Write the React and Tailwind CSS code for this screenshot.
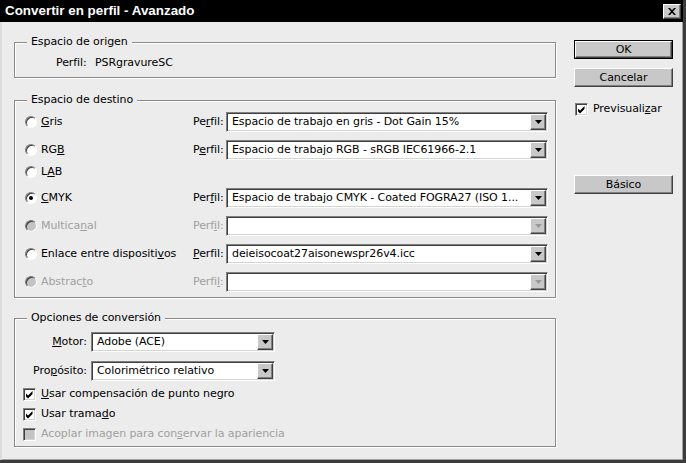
import React from 'react';

// Classic Windows-style "Convertir en perfil" dialog

const U = ({ children }) => <span className="underline underline-offset-[1px]">{children}</span>;

function Radio({ checked = false, disabled = false, children }) {
  return (
    <div className={`flex items-center gap-[4px] ${disabled ? 'text-[#a0a0a0]' : 'text-black'}`}>
      <div
        className={`flex h-[12px] w-[12px] shrink-0 items-center justify-center rounded-full border border-t-[#7a7a7a] border-l-[#7a7a7a] border-b-white border-r-white shadow-[inset_1px_1px_0_#404040] ${
          disabled ? 'bg-[#c4c4c4]' : 'bg-white'
        }`}
      >
        {checked && <div className="h-[4px] w-[4px] rounded-full bg-black" />}
      </div>
      <span>{children}</span>
    </div>
  );
}

function Checkbox({ checked = false, disabled = false, children }) {
  return (
    <div className={`flex items-center gap-[5px] ${disabled ? 'text-[#a0a0a0]' : 'text-black'}`}>
      <div
        className={`flex h-[13px] w-[13px] shrink-0 items-center justify-center border border-t-[#808080] border-l-[#808080] border-b-white border-r-white shadow-[inset_1px_1px_0_#404040,inset_-1px_-1px_0_#d4d4d4] ${
          disabled ? 'bg-[#c4c4c4]' : 'bg-white'
        }`}
      >
        {checked && (
          <svg width="9" height="9" viewBox="0 0 9 9">
            <path d="M1 3.5l2 2 4.5-4.5v3l-4.5 4.5-2-2z" fill="#000" />
          </svg>
        )}
      </div>
      {children && <span>{children}</span>}
    </div>
  );
}

function Select({ value = '', disabled = false, className = '' }) {
  return (
    <div
      className={`flex h-[20px] items-center border border-t-[#808080] border-l-[#808080] border-b-white border-r-white bg-white shadow-[inset_1px_1px_0_#404040,inset_-1px_-1px_0_#d4d4d4] ${className}`}
    >
      <span className="flex-1 truncate whitespace-nowrap pl-[5px] text-black">{value}</span>
      <div className="mr-[1px] flex h-[16px] w-[16px] shrink-0 items-center justify-center border border-t-white border-l-white border-b-[#404040] border-r-[#404040] bg-[#c8c8c8] shadow-[inset_-1px_-1px_0_#808080]">
        <svg width="7" height="4" viewBox="0 0 7 4">
          <path d="M0 0h7L3.5 4z" fill={disabled ? '#9a9a9a' : '#000'} />
        </svg>
      </div>
    </div>
  );
}

function Button({ children, isDefault = false, className = '' }) {
  return (
    <div className={`h-[19px] w-[99px] ${isDefault ? 'border border-black' : ''} ${className}`}>
      <div className="flex h-full w-full items-center justify-center border border-t-white border-l-white border-b-[#404040] border-r-[#404040] bg-[#c8c8c8] shadow-[inset_-1px_-1px_0_#808080] text-black">
        {children}
      </div>
    </div>
  );
}

function Group({ title, className = '', children }) {
  return (
    <fieldset
      className={`border border-[#8a8a8a] pl-[10px] pr-[6px] shadow-[inset_1px_1px_0_#fff,1px_1px_0_#fff] ${className}`}
    >
      <legend className="ml-[2px] bg-[#ececec] px-[4px] leading-[14px] text-black">{title}</legend>
      {children}
    </fieldset>
  );
}

function DestRow({ radio, perfil, value, disabled, className = '' }) {
  return (
    <div className={`flex h-[20px] items-center ${className}`}>
      <div className="w-[168px]">{radio}</div>
      {perfil && (
        <>
          <div className={`w-[33px] ${disabled ? 'text-[#a0a0a0]' : 'text-black'}`}>{perfil}</div>
          <Select className="w-[322px]" value={value} disabled={disabled} />
        </>
      )}
    </div>
  );
}

export default function App() {
  return (
    <div className="flex h-[463px] w-[686px] flex-col border-r-[3px] border-b-[3px] border-[#3c3c3c] bg-[#ececec] font-['DejaVu_Sans',sans-serif] text-[11px] leading-[14px] tracking-[-0.08px] text-black">
      {/* Title bar */}
      <div className="flex h-[22px] shrink-0 items-center justify-between bg-black pl-[5px] pr-[2px]">
        <span className="font-['Liberation_Sans',sans-serif] text-[13.4px] font-bold tracking-normal text-white">
          Convertir en perfil - Avanzado
        </span>
        <div className="flex h-[15px] w-[18px] items-center justify-center border border-t-white border-l-white border-b-[#404040] border-r-[#404040] bg-[#c8c8c8] shadow-[inset_-1px_-1px_0_#808080]">
          <svg width="8" height="7" viewBox="0 0 8 7">
            <path d="M0 0h2l2 2.2L6 0h2L5 3.5 8 7H6L4 4.8 2 7H0l3-3.5z" fill="#000" />
          </svg>
        </div>
      </div>

      {/* Body */}
      <div className="flex flex-1 border-l-[2px] border-[#dcdcdc] pl-[12px] pt-[13px] shadow-[inset_-1px_-1px_0_#a0a0a0]">
        {/* Left column */}
        <div className="flex w-[542px] flex-col">
          <Group title="Espacio de origen" className="pb-[7px]">
            <div className="mt-[7px] flex h-[14px] items-center pl-[31px]">
              <span className="w-[39px]">Perfil:</span>
              <span>PSRgravureSC</span>
            </div>
          </Group>

          <Group title="Espacio de destino" className="mt-[15px] pb-[5px]">
            <div className="pt-[5px]">
              <DestRow
                radio={<Radio><U>G</U>ris</Radio>}
                perfil={<>Pe<U>r</U>fil:</>}
                value="Espacio de trabajo en gris - Dot Gain 15%"
              />
              <DestRow
                className="mt-[8px]"
                radio={<Radio>RG<U>B</U></Radio>}
                perfil={<>P<U>e</U>rfil:</>}
                value="Espacio de trabajo RGB - sRGB IEC61966-2.1"
              />
              <DestRow className="mt-[2px]" radio={<Radio>L<U>A</U>B</Radio>} />
              <DestRow
                className="mt-[6px]"
                radio={<Radio checked><U>C</U>MYK</Radio>}
                perfil={<>Per<U>f</U>il:</>}
                value="Espacio de trabajo CMYK - Coated FOGRA27 (ISO 1..."
              />
              <DestRow
                className="mt-[8px]"
                disabled
                radio={<Radio disabled>Multica<U>n</U>al</Radio>}
                perfil={<>Perf<U>i</U>l:</>}
                value=""
              />
              <DestRow
                className="mt-[8px]"
                radio={<Radio>Enlace entre dispositi<U>v</U>os</Radio>}
                perfil={<><U>P</U>erfil:</>}
                value="deieisocoat27aisonewspr26v4.icc"
              />
              <DestRow
                className="mt-[8px]"
                disabled
                radio={<Radio disabled>Abstrac<U>t</U>o</Radio>}
                perfil={<>Perfi<U>l</U>:</>}
                value=""
              />
            </div>
          </Group>

          <Group title="Opciones de conversión" className="mt-[13px] pb-[2px]">
            <div className="pt-[7px]">
              <div className="flex h-[20px] items-center">
                <span className="w-[66px] pr-[4px] text-right"><U>M</U>otor:</span>
                <Select className="w-[184px]" value="Adobe (ACE)" />
              </div>
              <div className="mt-[9px] flex h-[20px] items-center">
                <span className="w-[66px] pr-[4px] text-right">Pro<U>p</U>ósito:</span>
                <Select className="w-[184px]" value="Colorimétrico relativo" />
              </div>
              <div className="-ml-[2px] mt-[3px] flex h-[20px] items-center">
                <Checkbox checked><U>U</U>sar compensación de punto negro</Checkbox>
              </div>
              <div className="-ml-[2px] flex h-[20px] items-center">
                <Checkbox checked>Usar trama<U>d</U>o</Checkbox>
              </div>
              <div className="-ml-[2px] flex h-[20px] items-center">
                <Checkbox disabled>Acoplar imagen para con<U>s</U>ervar la apariencia</Checkbox>
              </div>
            </div>
          </Group>
        </div>

        {/* Right column */}
        <div className="ml-[18px] mt-[5px] flex w-[99px] flex-col">
          <Button isDefault>OK</Button>
          <Button className="mt-[9px]">Cancelar</Button>
          <div className="ml-[1px] mt-[15px] flex h-[14px] items-center">
            <Checkbox checked>Previsuali<U>z</U>ar</Checkbox>
          </div>
          <Button className="mt-[59px]">Básico</Button>
        </div>
      </div>
    </div>
  );
}
